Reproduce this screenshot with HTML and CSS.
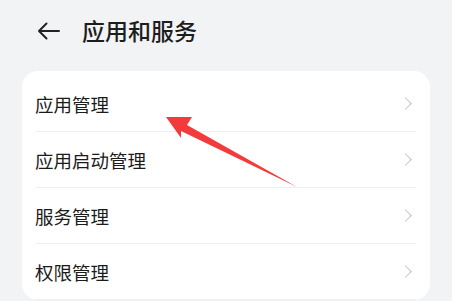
FILE: index.html
```html
<!DOCTYPE html>
<html lang="zh-CN">
<head>
    <meta charset="UTF-8">
    <meta name="viewport" content="width=device-width, initial-scale=1.0">
    <title>应用和服务</title>
    <link rel="stylesheet" href="styles.css">
</head>
<body>

    <!-- Header -->
    <div class="header">
        <svg class="back" width="24" height="18" viewBox="0 0 24 18">
            <path d="M22 9H2M9.5 1.5L2 9l7.5 7.5" fill="none" stroke="#222" stroke-width="2" stroke-linecap="round" stroke-linejoin="round"/>
        </svg>
        <h1>应用和服务</h1>
    </div>

    <!-- Settings list -->
    <div class="card">
        <div class="row"><span>应用管理</span><i class="chevron"></i></div>
        <div class="row"><span>应用启动管理</span><i class="chevron"></i></div>
        <div class="row"><span>服务管理</span><i class="chevron"></i></div>
        <div class="row"><span>权限管理</span><i class="chevron"></i></div>
    </div>

    <!-- annotation arrow -->
    <svg class="pointer" width="452" height="301" viewBox="0 0 452 301">
        <polygon points="166,117 192,117 187,125 297,187 181,131 181,138" fill="#f33b3b"/>
    </svg>

</body>
</html>
```

FILE: styles.css
```css
/* Styling */
body {
    font-family: "Noto Sans CJK SC", "Noto Sans", sans-serif;
    background: #f1f3f5;
    color: #1b1b1b;
    margin: 0;
    width: 452px;
    height: 301px;
    overflow: hidden;
    position: relative;
}

.header {
    display: flex;
    align-items: center;
    height: 60px;
    padding-left: 37px;
}
.back {
    display: block;
    margin-top: 1px;
}
.header h1 {
    margin: 0 0 0 21px;
    font-size: 23px;
    font-weight: 500;
    color: #1d1d1d;
}

.card {
    background: #fff;
    border-radius: 16px;
    margin: 11px 22px 0 22px;
    padding-top: 5px;
}
.row {
    display: flex;
    align-items: center;
    justify-content: space-between;
    height: 56px;
    margin: 0 14px 0 13px;
    border-bottom: 1px solid #eceeef;
    box-sizing: border-box;
    font-size: 18.5px;
}
.chevron {
    width: 8px;
    height: 8px;
    border-top: 1.6px solid #c4c4c4;
    border-right: 1.6px solid #c4c4c4;
    transform: rotate(45deg);
    margin-right: 6px;
}

.pointer {
    position: absolute;
    top: 0;
    left: 0;
}
```
